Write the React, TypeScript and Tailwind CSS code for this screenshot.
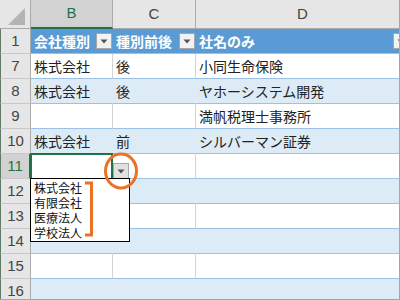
const rows = [
  { n: '7', a: '株式会社', b: '後', c: '小同生命保険' },
  { n: '8', a: '株式会社', b: '後', c: 'ヤホーシステム開発' },
  { n: '9', a: '', b: '', c: '満帆税理士事務所' },
  { n: '10', a: '株式会社', b: '前', c: 'シルバーマン証券' },
  { n: '11', a: '', b: '', c: '' },
  { n: '12', a: '', b: '', c: '' },
  { n: '13', a: '', b: '', c: '' },
  { n: '14', a: '', b: '', c: '' },
  { n: '15', a: '', b: '', c: '' },
  { n: '16', a: '', b: '', c: '' },
]

const jp = { fontFamily: '"Noto Sans CJK JP", "Noto Sans", sans-serif' }
const lat = { fontFamily: '"Liberation Sans", Arial, sans-serif' }

function FilterButton({ className = '' }: { className?: string }) {
  return (
    <div className={`flex items-center justify-center w-4 h-4 shrink-0 bg-[#f2f2f2] border border-[#a6a6a6] ${className}`}>
      <svg width="8" height="5" viewBox="0 0 8 5">
        <path d="M0.5 0.5 L7.5 0.5 L4 4.5 Z" fill="#555" />
      </svg>
    </div>
  )
}

export default function App() {
  return (
    <div className="relative w-[400px] h-[300px] overflow-hidden bg-white border-r border-b border-[#a6a6a6]" style={jp}>
      {/* column headers */}
      <div className="flex h-[29px] bg-[#e6e6e6]">
        <div className="relative w-[31px] shrink-0 border-r border-b border-[#ababab]">
          <svg className="absolute left-[8px] top-[8px]" width="18" height="18" viewBox="0 0 18 18">
            <path d="M17 0 L17 17 L0 17 Z" fill="#b4b4b4" />
          </svg>
        </div>
        <div className="w-[82px] shrink-0 flex items-center justify-center bg-[#d2d2d2] border-r border-[#ababab] border-b-2 border-b-[#217346] text-[15px] text-[#217346]" style={lat}>B</div>
        <div className="w-[83px] shrink-0 flex items-center justify-center border-r border-b border-[#ababab] text-[15px] text-[#444]" style={lat}>C</div>
        <div className="w-[214px] shrink-0 flex items-center justify-center border-r border-b border-[#ababab] text-[15px] text-[#444]" style={lat}>D</div>
      </div>

      {/* table header row 1 */}
      <div className="flex h-[25px]">
        <div className="w-[31px] shrink-0 flex items-center justify-center bg-[#e6e6e6] border-l border-l-[#5f7a66] border-r border-r-[#ababab] border-b border-b-[#c8c8c8] text-[15px] text-[#444]" style={lat}>1</div>
        <div className="w-[82px] shrink-0 flex items-center justify-between pl-[3px] pr-px bg-[#5b9bd5] border-b border-[#9bc2e6] text-[14px] font-bold text-white">
          <span>会社種別</span>
          <FilterButton />
        </div>
        <div className="w-[83px] shrink-0 flex items-center justify-between pl-[3px] pr-px bg-[#5b9bd5] border-b border-[#9bc2e6] text-[14px] font-bold text-white">
          <span>種別前後</span>
          <FilterButton />
        </div>
        <div className="w-[214px] shrink-0 flex items-center justify-between pl-[3px] pr-px bg-[#5b9bd5] border-b border-[#9bc2e6] text-[14px] font-bold text-white">
          <span>社名のみ</span>
          <FilterButton />
        </div>
      </div>

      {rows.map((r, i) => {
        const blue = i % 2 === 1
        const active = r.n === '11'
        const cell = blue
          ? 'bg-[#ddebf7] border-r border-r-[#ddebf7]'
          : 'bg-white border-r border-r-[#d4d4d4]'
        return (
          <div key={r.n} className="flex h-[25px]">
            <div
              className={`w-[31px] shrink-0 flex items-center justify-center border-l border-l-[#5f7a66] border-b border-b-[#c8c8c8] text-[15px] ${
                active
                  ? 'bg-[#d2d2d2] text-[#217346] border-r-2 border-r-[#217346]'
                  : 'bg-[#e6e6e6] text-[#444] border-r border-r-[#ababab]'
              }`}
              style={lat}
            >
              {r.n}
            </div>
            <div className={`w-[82px] shrink-0 flex items-center pl-[3px] border-b border-b-[#9bc2e6] text-[14px] text-[#222] ${cell}`}>{r.a}</div>
            <div className={`w-[83px] shrink-0 flex items-center pl-[3px] border-b border-b-[#9bc2e6] text-[14px] text-[#222] ${cell}`}>{r.b}</div>
            <div className={`w-[214px] shrink-0 flex items-center pl-[3px] border-b border-b-[#9bc2e6] text-[14px] text-[#222] ${cell}`}>{r.c}</div>
          </div>
        )
      })}

      {/* active cell B11 */}
      <div className="absolute left-[30px] top-[153px] w-[83px] h-[27px] border-2 border-[#217346]" />

      {/* in-cell dropdown button */}
      <div className="absolute left-[113px] top-[163px] w-4 h-4 flex items-center justify-center bg-[#e1e1e1] border border-[#a6a6a6]">
        <svg width="8" height="5" viewBox="0 0 8 5">
          <path d="M0.5 0.5 L7.5 0.5 L4 4.5 Z" fill="#555" />
        </svg>
      </div>

      {/* dropdown list */}
      <div className="absolute left-[30px] top-[178px] w-[100px] h-[64px] bg-white border border-black pl-[3px] pt-[1px] text-[12px] leading-[15px] text-[#111]">
        <div className="h-[15px]">株式会社</div>
        <div className="h-[15px]">有限会社</div>
        <div className="h-[15px]">医療法人</div>
        <div className="h-[15px]">学校法人</div>
      </div>

      {/* orange annotations */}
      <svg className="absolute left-0 top-0 pointer-events-none" width="400" height="300" viewBox="0 0 400 300">
        <ellipse cx="121" cy="171" rx="15.5" ry="17" fill="none" stroke="#ed7024" strokeWidth="3" />
        <path d="M85 183 L91.5 183 L91.5 235 L85 235" fill="none" stroke="#ed7024" strokeWidth="3" />
      </svg>
    </div>
  )
}
